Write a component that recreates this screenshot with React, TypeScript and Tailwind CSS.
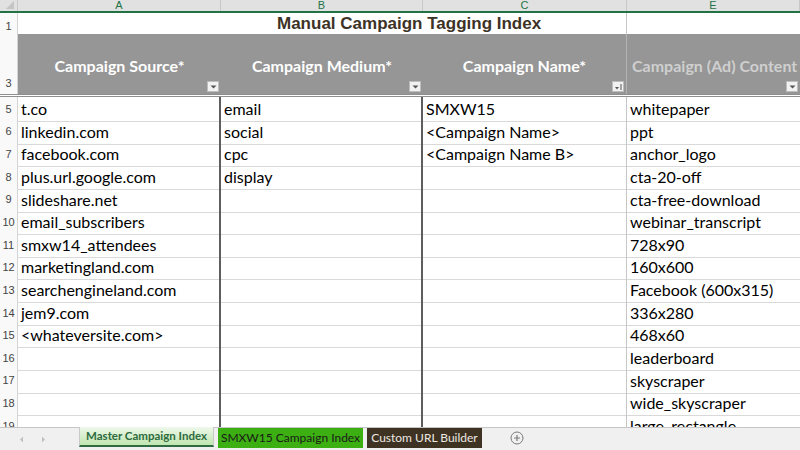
import React from "react";

const colA = [
  "t.co",
  "linkedin.com",
  "facebook.com",
  "plus.url.google.com",
  "slideshare.net",
  "email_subscribers",
  "smxw14_attendees",
  "marketingland.com",
  "searchengineland.com",
  "jem9.com",
  "<whateversite.com>",
  "",
  "",
  "",
  "",
];
const colB = ["email", "social", "cpc", "display"];
const colC = ["SMXW15", "<Campaign Name>", "<Campaign Name B>"];
const colE = [
  "whitepaper",
  "ppt",
  "anchor_logo",
  "cta-20-off",
  "cta-free-download",
  "webinar_transcript",
  "728x90",
  "160x600",
  "Facebook (600x315)",
  "336x280",
  "468x60",
  "leaderboard",
  "skyscraper",
  "wide_skyscraper",
  "large_rectangle",
];

const grid = "grid grid-cols-[18px_203px_202px_204px_173px]";

function FilterBtn({ sort }: { sort?: boolean }) {
  return (
    <div className="w-[12px] h-[11px] bg-[#f2f2f2] border border-[#bdbdbd] flex items-center justify-center">
      {sort ? (
        <svg width="9" height="8" viewBox="0 0 9 8">
          <path d="M1 4 L5 4 L3 6.5 Z" fill="#555" />
          <path d="M7 1 L7 7" stroke="#555" strokeWidth="1" />
        </svg>
      ) : (
        <svg width="7" height="4" viewBox="0 0 7 4">
          <path d="M0.5 0.5 L6.5 0.5 L3.5 3.5 Z" fill="#555" />
        </svg>
      )}
    </div>
  );
}

function HeaderCell({ label, light, sort }: { label: string; light?: boolean; sort?: boolean }) {
  return (
    <div className="relative h-full flex items-center justify-center overflow-hidden pt-[3px]">
      <span
        className={`font-bold text-[16px] whitespace-nowrap ${light ? "text-[#cfcfcf] pl-[5px] w-full" : "text-white"}`}
      >
        {label}
      </span>
      <div className="absolute right-[2px] bottom-[2px]">
        <FilterBtn sort={sort} />
      </div>
    </div>
  );
}

export default function App() {
  return (
    <div
      className="w-[800px] h-[450px] bg-white flex flex-col overflow-hidden text-black"
      style={{ fontFamily: "Lato, 'Open Sans', sans-serif" }}
    >
      <div className="flex-1 overflow-hidden">
        {/* column letters */}
        <div className={`${grid} h-[13px] bg-[#e1e1e1] border-b-2 border-[#217346]`}>
          <div className="relative border-r border-[#c8c8c8]">
            <svg width="10" height="10" viewBox="0 0 10 10" className="absolute right-[2px] bottom-[1px]">
              <path d="M9 1 L9 9 L1 9 Z" fill="#c4c4c4" />
            </svg>
          </div>
          {["A", "B", "C", "E"].map((l) => (
            <div
              key={l}
              className="flex items-center justify-center text-[11px] leading-none text-[#217346] border-r border-[#c8c8c8]"
              style={{ fontFamily: "'Liberation Sans', Arial, sans-serif" }}
            >
              {l}
            </div>
          ))}
        </div>

        {/* row 1 title */}
        <div className={`${grid} h-[21px]`}>
          <div
            className="flex items-end justify-center pb-[1px] text-[11px] text-[#444] bg-[#f9f9f9] border-r border-[#d4d4d4]"
            style={{ fontFamily: "'Liberation Sans', Arial, sans-serif" }}
          >
            1
          </div>
          <div className="col-span-3 border-r border-[#c6c6c6]">
            <div
              className="pl-[259px] whitespace-nowrap text-[17px] font-bold text-[#3d3226] leading-[22px]"
              style={{ fontFamily: "'Liberation Sans', Arial, sans-serif" }}
            >
              Manual Campaign Tagging Index
            </div>
          </div>
          <div />
        </div>

        {/* row 3 header */}
        <div className={`${grid} h-[63px] border-b-[3px] border-double border-[#8f8f8f]`}>
          <div
            className="flex items-end justify-center pb-[3px] text-[11px] text-[#444] bg-[#f9f9f9] border-r border-[#d4d4d4]"
            style={{ fontFamily: "'Liberation Sans', Arial, sans-serif" }}
          >
            3
          </div>
          <div className="bg-[#969696]">
            <HeaderCell label="Campaign Source*" />
          </div>
          <div className="bg-[#969696]">
            <HeaderCell label="Campaign Medium*" />
          </div>
          <div className="bg-[#969696] border-r border-[#b4b4b4]">
            <HeaderCell label="Campaign Name*" sort />
          </div>
          <div className="bg-[#969696]">
            <HeaderCell label="Campaign (Ad) Content" light />
          </div>
        </div>

        {/* data rows */}
        {colE.map((e, i) => (
          <div key={i} className={`${grid} h-[22.65px]`}>
            <div
              className="flex items-center justify-center text-[11px] text-[#444] bg-[#f9f9f9] border-r border-b border-[#d4d4d4]"
              style={{ fontFamily: "'Liberation Sans', Arial, sans-serif" }}
            >
              {i + 5}
            </div>
            <div className="flex items-center pl-[3px] text-[16px] whitespace-nowrap border-b border-[#d9d9d9] border-r-2 border-r-[#5e5e5e]">
              {colA[i]}
            </div>
            <div className="flex items-center pl-[3px] text-[16px] whitespace-nowrap border-b border-[#d9d9d9] border-r-2 border-r-[#5e5e5e]">
              {colB[i] ?? ""}
            </div>
            <div className="flex items-center pl-[3px] text-[16px] whitespace-nowrap border-b border-[#d9d9d9] border-r border-r-[#c6c6c6]">
              {colC[i] ?? ""}
            </div>
            <div className="flex items-center pl-[3px] text-[16px] whitespace-nowrap border-b border-[#d9d9d9]">
              {e}
            </div>
          </div>
        ))}
      </div>

      {/* sheet tabs */}
      <div className="h-[23px] shrink-0 bg-[#f0f0f0] border-t border-[#c6c6c6] flex items-start text-[12px] whitespace-nowrap">
        <div className="w-[79px] h-full flex items-center gap-[17px] pl-[19px]">
          <svg width="5" height="7" viewBox="0 0 5 7">
            <path d="M4 0.5 L1 3.5 L4 6.5 Z" fill="#c0c0c0" />
          </svg>
          <svg width="5" height="7" viewBox="0 0 5 7">
            <path d="M1 0.5 L4 3.5 L1 6.5 Z" fill="#c0c0c0" />
          </svg>
        </div>
        <div className="h-[20px] w-[135px] flex items-center justify-center font-bold text-[11.5px] text-[#2e6b40] bg-gradient-to-b from-[#eef8ea] to-[#bfe6b0] border-b-2 border-[#2e6b40] border-x border-x-[#c9c9c9] -mt-[1px]">
          Master Campaign Index
        </div>
        <div className="ml-[4px] h-[20px] w-[145px] flex items-center justify-center text-[#1a1a1a] bg-[#3cb012]">
          SMXW15 Campaign Index
        </div>
        <div className="ml-[4px] h-[20px] w-[115px] flex items-center justify-center text-[#ece8e2] bg-[#3e3222]">
          Custom URL Builder
        </div>
        <div className="ml-[28px] h-[20px] flex items-center">
          <svg width="14" height="14" viewBox="0 0 14 14">
            <circle cx="7" cy="7" r="6" fill="none" stroke="#7a7a7a" strokeWidth="1" />
            <path d="M7 4 L7 10 M4 7 L10 7" stroke="#7a7a7a" strokeWidth="1.2" />
          </svg>
        </div>
      </div>
    </div>
  );
}
